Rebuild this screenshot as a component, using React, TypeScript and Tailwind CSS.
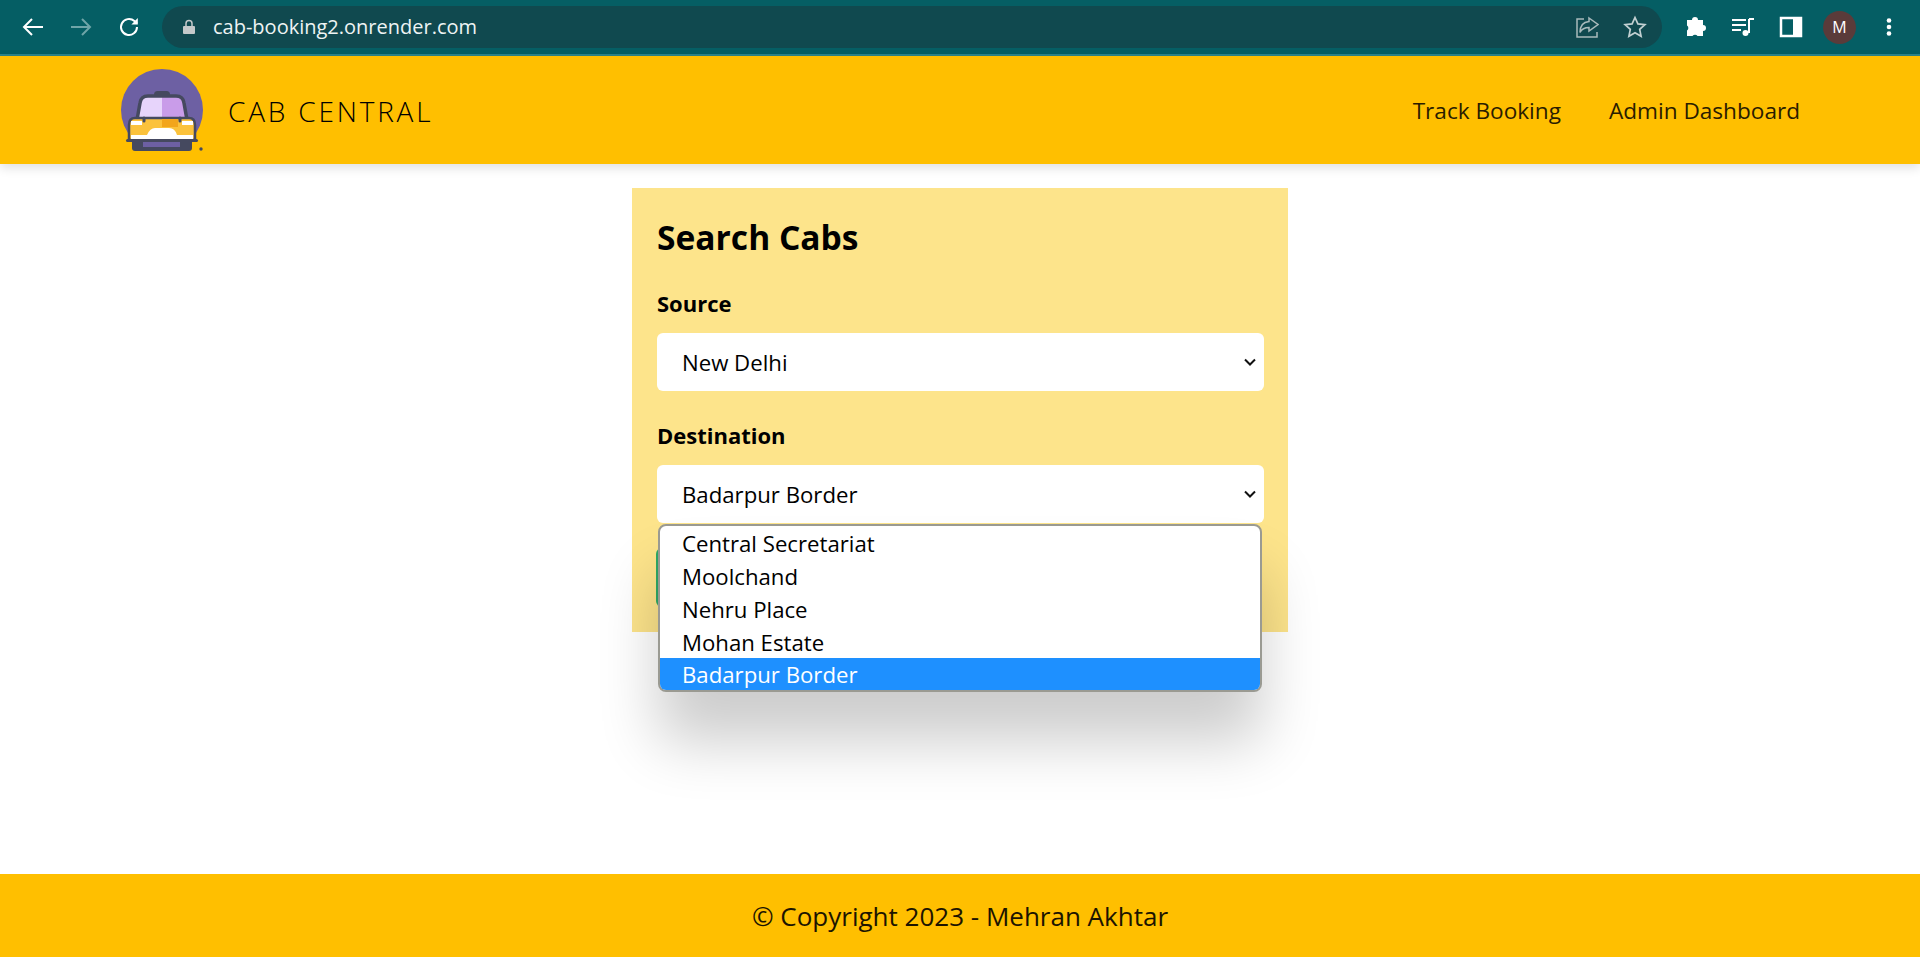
const FONT = "font-['Open_Sans','Noto_Sans',sans-serif]";

function BrowserBar() {
  return (
    <div className="h-[56px] bg-[#055e64] border-b-2 border-[#2c8489] flex items-center shrink-0 text-white">
      <div className="w-[162px] flex items-center pl-[21px] gap-[24px] shrink-0">
        <svg width="24" height="24" viewBox="0 0 24 24" fill="none" stroke="#fff" strokeWidth="2"><path d="M22 12H3M11 4l-8 8 8 8" /></svg>
        <svg width="24" height="24" viewBox="0 0 24 24" fill="none" stroke="#6fa5a8" strokeWidth="2"><path d="M2 12h19M13 4l8 8-8 8" /></svg>
        <svg width="24" height="24" viewBox="0 0 24 24" fill="none" stroke="#fff" strokeWidth="2"><path d="M20 12a8 8 0 1 1-2.6-5.900L20 8.500" /><path d="M20.800 3v6.400h-6.400" fill="#fff" stroke="none" /></svg>
      </div>
      <div className="w-[1500px] h-[42px] rounded-full bg-[#10494f] flex items-center pl-[20px] pr-[15px]">
        <svg width="14" height="16" viewBox="0 0 14 16" fill="#c4c9ca"><path d="M2 7h10a1 1 0 0 1 1 1v6a1 1 0 0 1-1 1H2a1 1 0 0 1-1-1V8a1 1 0 0 1 1-1z" /><path d="M4 7V4.500a3 3 0 0 1 6 0V7" fill="none" stroke="#c4c9ca" strokeWidth="1.500" /></svg>
        <span className={`${FONT} ml-[17px] text-[20px] text-[#eef4f4]`}>cab-booking2.onrender.com</span>
        <div className="ml-auto flex items-center gap-[24px]">
          <svg width="24" height="24" viewBox="0 0 24 24" fill="none" stroke="#a9babc" strokeWidth="1.500"><path d="M9 4H2v18h20v-5" /><path d="M14 3l9 6.500-9 6.500v-3.500c-4 0-7 1-9 5 0-6 3-10.500 9-11z" /></svg>
          <svg width="24" height="24" viewBox="0 0 24 24" fill="none" stroke="#c2d0d2" strokeWidth="1.700"><path d="M12 2.500l2.900 6.400 7 .8-5.200 4.700 1.400 6.900-6.100-3.500-6.100 3.500 1.400-6.900L2.100 9.700l7-.8z" /></svg>
        </div>
      </div>
      <div className="flex-1 flex items-center pl-[21px] gap-[24px]">
        <svg width="24" height="24" viewBox="0 0 24 24" fill="#fff"><path d="M3 6h5a3 3 0 0 1 6 0h5v5a3 3 0 0 1 0 6v5h-5.500a3 3 0 0 0-5 0H3v-5.500a3 3 0 0 0 0-5z" transform="translate(1 -1)" /></svg>
        <svg width="24" height="24" viewBox="0 0 24 24" fill="none" stroke="#fff" strokeWidth="2"><path d="M1 5h14M1 10h14M1 15h9" /><path d="M18 4v14" /><path d="M18 4h5" /><circle cx="14.500" cy="18" r="3" fill="#fff" stroke="none" /></svg>
        <svg width="24" height="24" viewBox="0 0 24 24"><rect x="2" y="3" width="20" height="18" fill="none" stroke="#fff" strokeWidth="2.500" /><rect x="14" y="3" width="8" height="18" fill="#fff" /></svg>
        <div className="w-[33px] h-[33px] -ml-[4px] -mr-[3px] rounded-full bg-[#5a3b3a] flex items-center justify-center text-[16px] text-white">M</div>
        <svg width="24" height="24" viewBox="0 0 24 24" fill="#fff"><circle cx="12" cy="5.500" r="2.300" /><circle cx="12" cy="12" r="2.300" /><circle cx="12" cy="18.500" r="2.300" /></svg>
      </div>
    </div>
  );
}

function Logo() {
  return (
    <svg width="100" height="100" viewBox="0 0 100 100" className="shrink-0">
      <circle cx="52" cy="50" r="41" fill="#6d60a3" />
      <rect x="44" y="31" width="16" height="8" rx="3.500" fill="#45495f" />
      <path d="M27 60l3-17q1-7 8-7h28q7 0 8 7l3 17z" fill="#e7d4fb" />
      <path d="M52 36h14q7 0 8 7l3 17H52z" fill="#c99ce9" />
      <path d="M27 60l3-17q1-7 8-7h28q7 0 8 7l3 17" fill="none" stroke="#45495f" strokeWidth="3.500" />
      <path d="M19 65q0-7 6-7h54q6 0 6 7v15H19z" fill="#fbc23c" stroke="#45495f" strokeWidth="2.500" />
      <path d="M52 59h16v8H52z" fill="#f2a51c" />
      <path d="M21 61h11v4H21zM72 61h11v4H72z" fill="#fff" />
      <path d="M21 79v-4h16q3-7 8-7h14q6 0 8 7h16v4z" fill="#fff" />
      <path d="M34 58v3M70 58v3" stroke="#45495f" strokeWidth="3" strokeLinecap="round" />
      <rect x="16" y="79" width="72" height="3" rx="1.500" fill="#45495f" />
      <rect x="22" y="79" width="60" height="12" rx="3" fill="#45495f" />
      <rect x="33" y="82" width="37" height="5" fill="#6d60a3" />
      <circle cx="91" cy="89" r="1.700" fill="#45495f" />
    </svg>
  );
}

function Chevron() {
  return (
    <svg width="14" height="14" viewBox="0 0 14 14" fill="none" stroke="#111" strokeWidth="2" className="absolute right-[7px] top-[22px] pointer-events-none"><path d="M2 4.500l5 5 5-5" /></svg>
  );
}

const stops = ['Central Secretariat', 'Moolchand', 'Nehru Place', 'Mohan Estate'];

export default function App() {
  return (
    <div className={`${FONT} h-[957px] flex flex-col bg-white text-black overflow-hidden`}>
      <BrowserBar />

      <nav className="h-[108px] bg-[#ffbf00] flex items-center pl-[110px] pr-[120px] shrink-0 shadow-[0_4px_10px_rgba(0,0,0,0.12)] relative z-10">
        <Logo />
        <span className="ml-[18px] mt-[1px] text-[28px] tracking-[2.800px] font-light">CAB CENTRAL</span>
        <div className="ml-auto mt-[2px] flex items-center gap-[48px] text-[22.600px] text-[#2a1c00]">
          <a href="#">Track Booking</a>
          <a href="#">Admin Dashboard</a>
        </div>
      </nav>

      <main className="flex-1 pt-[24px]">
        <div className="w-[656px] h-[444px] mx-auto bg-[#fde48b] pt-[25px] pl-[25px] pr-[24px]">
          <h1 className="text-[33.600px] leading-[48px] font-bold">Search Cabs</h1>
          <label className="block mt-[27px] mb-[15px] text-[22px] leading-[30px] font-bold">Source</label>
          <div className="relative">
            <select defaultValue="New Delhi" className="w-full h-[58px] rounded-md bg-white pl-[25px] pt-[2px] text-[22.200px] appearance-none">
              <option>New Delhi</option>
            </select>
            <Chevron />
          </div>
          <label className="block mt-[29px] mb-[15px] text-[22px] leading-[30px] font-bold">Destination</label>
          <div className="relative">
            <select defaultValue="Badarpur Border" className="w-full h-[58px] rounded-md bg-white pl-[25px] pt-[2px] text-[22.200px] appearance-none">
              <option>Badarpur Border</option>
            </select>
            <Chevron />
            {/* open list of the select */}
            <ul className="absolute z-20 left-[1px] top-[59px] w-[604px] h-[168px] rounded-lg border-2 border-[#9a9a92] bg-white overflow-hidden text-[22.200px] shadow-[0_50px_60px_rgba(0,0,0,0.2)]">
              {stops.map((s) => (
                <li key={s} className="h-[33px] leading-[36px] pl-[22px]">{s}</li>
              ))}
              <li className="h-[33px] leading-[34px] pl-[22px] bg-[#1e90ff] text-white">Badarpur Border</li>
            </ul>
          </div>
          <button aria-label="Search" className="block mt-[25px] -ml-[1px] h-[59px] w-[120px] rounded-md bg-[#2fa866]" />
        </div>
      </main>

      <footer className="h-[83px] bg-[#ffbf00] flex items-center justify-center pt-[2px] text-[26px] text-[#1c1400] shrink-0">
        © Copyright 2023 - Mehran Akhtar
      </footer>
    </div>
  );
}
